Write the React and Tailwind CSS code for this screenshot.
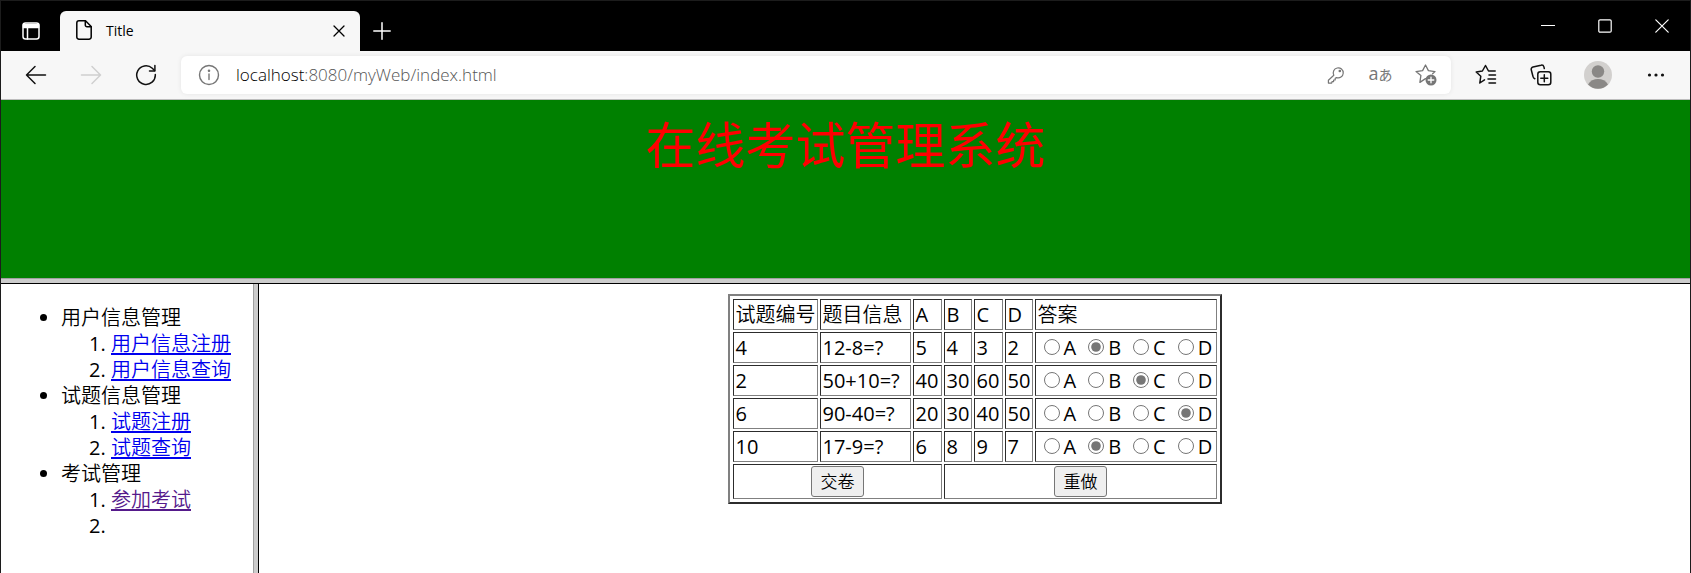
import { useState } from "react";

const CHOICES = ["A", "B", "C", "D"];

const QUESTIONS = [
  { id: "4", text: "12-8=?", options: ["5", "4", "3", "2"], answer: "B" },
  { id: "2", text: "50+10=?", options: ["40", "30", "60", "50"], answer: "C" },
  { id: "6", text: "90-40=?", options: ["20", "30", "40", "50"], answer: "D" },
  { id: "10", text: "17-9=?", options: ["6", "8", "9", "7"], answer: "B" },
];

const MENU = [
  {
    title: "用户信息管理",
    items: [{ label: "用户信息注册" }, { label: "用户信息查询" }],
  },
  { title: "试题信息管理", items: [{ label: "试题注册" }, { label: "试题查询" }] },
  { title: "考试管理", items: [{ label: "参加考试", visited: true }, {}] },
];

function Icon({ size = 20, width = 1.5, children, className = "" }) {
  return (
    <svg
      aria-hidden="true"
      width={size}
      height={size}
      viewBox={`0 0 ${size} ${size}`}
      fill="none"
      stroke="currentColor"
      strokeWidth={width}
      strokeLinecap="round"
      strokeLinejoin="round"
      className={className}
    >
      {children}
    </svg>
  );
}

function BarButton({ label, className, children }) {
  return (
    <button
      type="button"
      aria-label={label}
      className={`flex h-9 shrink-0 items-center justify-center ${className}`}
    >
      {children}
    </button>
  );
}

function TitleBar() {
  return (
    <div className="flex h-[50px] items-end bg-black text-white">
      <BarButton label="Tab actions" className="mb-[2px] w-[59px]">
        <Icon size={18}>
          <rect x="1" y="1" width="16" height="16" rx="2.5" />
          <path d="M1.5 2.5h15v3h-15z" fill="currentColor" />
          <path d="M5.500 6v11" />
        </Icon>
      </BarButton>
      <div className="flex h-10 w-[300px] items-center rounded-t-md bg-[#f7f7f7] pr-[7px] pl-4 text-black">
        <Icon size={20} className="-mt-[2px] shrink-0">
          <path d="M3 .8h6.500l5.700 5.700V17a2.200 2.200 0 0 1-2.200 2.200H3A2.200 2.200 0 0 1 .8 17V3A2.200 2.200 0 0 1 3 .8z" />
          <path d="M9.300 1v4a1.700 1.700 0 0 0 1.700 1.700h4" />
        </Icon>
        <span className="ml-[10px] flex-1 text-sm">Title</span>
        <BarButton label="Close tab" className="w-7">
          <Icon size={12} width={1.3}>
            <path d="M1 1l10 10M11 1L1 11" />
          </Icon>
        </BarButton>
      </div>
      <BarButton label="New tab" className="mb-[2px] ml-[2px] w-10">
        <Icon size={18}>
          <path d="M9 .8v16.400M.8 9h16.400" />
        </Icon>
      </BarButton>
      <div className="mb-[7px] ml-auto flex">
        <BarButton label="Minimize" className="w-[57px]">
          <Icon size={14} width={1.2}>
            <path d="M.5 6.500h13" />
          </Icon>
        </BarButton>
        <BarButton label="Maximize" className="w-[57px]">
          <Icon size={14} width={1.2}>
            <rect x=".8" y=".8" width="12.400" height="12.400" rx="1.200" />
          </Icon>
        </BarButton>
        <BarButton label="Close" className="w-[57px]">
          <Icon size={14} width={1.2}>
            <path d="M.8.8l12.400 12.400M13.200.8L.8 13.200" />
          </Icon>
        </BarButton>
      </div>
    </div>
  );
}

function Toolbar() {
  return (
    <div className="flex h-[49px] items-center border-b border-[#bdbdbd] bg-[#f7f7f7] pr-[6px] pl-[7px] text-[#111]">
      <BarButton label="Back" className="w-[55px]">
        <Icon size={22}>
          <path d="M10 2.500L1.500 11l8.500 8.500M1.500 11h19" />
        </Icon>
      </BarButton>
      <BarButton label="Forward" className="w-[55px] text-[#cfcfcf]">
        <Icon size={22}>
          <path d="M12 2.500l8.500 8.500-8.500 8.500M20.500 11h-19" />
        </Icon>
      </BarButton>
      <BarButton label="Refresh" className="w-[55px]">
        <Icon size={22}>
          <path d="M20.300 10.500A9.300 9.300 0 1 1 17.300 4.200L19.500 6.500" />
          <path d="M19.900 1.500v5.400h-5.400" />
        </Icon>
      </BarButton>
      <div className="ml-2 flex h-[38px] min-w-0 flex-1 items-center rounded-md bg-white pr-[3px] text-[#767676] shadow-[0_0_5px_rgba(0,0,0,0.08)]">
        <BarButton label="Site information" className="w-[55px]">
          <Icon size={22} width={1.4}>
            <circle cx="11" cy="11" r="9.500" />
            <path d="M11 10v5.500" />
            <circle cx="11" cy="6.800" r=".6" fill="currentColor" />
          </Icon>
        </BarButton>
        <div
          role="textbox"
          aria-label="Address"
          className="min-w-0 flex-1 truncate text-[17px] leading-6 font-light text-[#555555]"
        >
          <span className="text-black">localhost</span>:8080/myWeb/index.html
        </div>
        <BarButton label="Passwords" className="w-[45px]">
          <Icon size={18} width={1.2}>
            <path d="M6.800 9.200A5 5 0 1 1 9.600 11.600L8.200 12.300v1.700H6.600v1.600H5l-.3 1.500H1.400v-2.900z" />
            <circle cx="12.800" cy="5" r=".7" fill="currentColor" />
          </Icon>
        </BarButton>
        <BarButton label="Translate" className="w-[45px]">
          <span className="flex items-baseline pb-[2px] leading-5">
            <span className="text-lg leading-5">a</span>
            <span className="text-sm leading-5">あ</span>
          </span>
        </BarButton>
        <BarButton label="Add to favorites" className="w-[45px]">
          <Icon size={22} width={1.3}>
            <path d="M10.500 14.600l-5.600 3.800 1-7L1 7.600l6.600-1L10.500 1l2.900 5.600 6.600 1-2.400 2.200" />
            <circle cx="16" cy="16" r="5.500" fill="currentColor" stroke="none" />
            <path d="M16 13.200v5.600M13.200 16h5.600" stroke="#fff" />
          </Icon>
        </BarButton>
      </div>
      <BarButton label="Favorites" className="ml-[7px] w-[55px]">
        <Icon size={22}>
          <path d="M9.500 15.800L4.800 19l1-6.800L1.200 8l6.200-1 3.100-5.500 3 5.500h6.700" />
          <path d="M14 11h6.500M13 15h7.500M14 19h6.500" />
        </Icon>
      </BarButton>
      <BarButton label="Collections" className="w-[55px]">
        <Icon size={22}>
          <rect x="7.800" y="7.800" width="13" height="13" rx="2.500" />
          <path d="M14.300 10.800v7M10.800 14.300h7" />
          <path d="M4.800 14.800a3 3 0 0 1-1.800-2.300L1.300 6A2.400 2.400 0 0 1 3 3l8-1.800a2.400 2.400 0 0 1 2.900 1.700l.4 1.600" />
        </Icon>
      </BarButton>
      <BarButton label="Profile" className="w-[60px]">
        <svg aria-hidden="true" width="28" height="28" viewBox="0 0 28 28">
          <circle cx="14" cy="14" r="14" fill="#d2d0ce" />
          <circle cx="14" cy="10.500" r="6.200" fill="#8a8886" />
          <path d="M4 23.500C6 19.800 10 18 14 18s8 1.800 10 5.500A14 14 0 0 1 4 23.500z" fill="#8a8886" />
        </svg>
      </BarButton>
      <BarButton label="Settings and more" className="w-14">
        <svg aria-hidden="true" width="18" height="4" viewBox="0 0 18 4" fill="currentColor">
          <circle cx="2.500" cy="2" r="1.600" />
          <circle cx="9" cy="2" r="1.600" />
          <circle cx="15.500" cy="2" r="1.600" />
        </svg>
      </BarButton>
    </div>
  );
}

function Sidebar() {
  return (
    <nav className="w-[252px] shrink-0 pt-[21px] pl-[60px] text-xl leading-[26px]">
      <ul className="list-disc">
        {MENU.map((group) => (
          <li key={group.title}>
            <span className="font-[350]">{group.title}</span>
            <ol className="list-decimal pl-[50px]">
              {group.items.map((item, index) => (
                <li key={index} className="min-h-[26px]">
                  {item.label && (
                    <a
                      href="#"
                      className={
                        item.visited
                          ? "font-[350] text-[#551a8b] underline decoration-2 underline-offset-2"
                          : "font-[350] text-[#0000ee] underline decoration-2 underline-offset-2"
                      }
                    >
                      {item.label}
                    </a>
                  )}
                </li>
              ))}
            </ol>
          </li>
        ))}
      </ul>
    </nav>
  );
}

const CELL =
  "border border-t-[#2c2c2c] border-r-[#808080] border-b-[#808080] border-l-[#2c2c2c] py-px pr-px pl-[2px]";
const HEADING_CELL = `${CELL} font-[350]`;
const BUTTON =
  "block mx-auto h-[31px] w-[53px] rounded-[3px] border border-[#767676] bg-[#efefef] text-[17px] leading-6 font-[350]";

function ExamTable() {
  const [answers, setAnswers] = useState(() => QUESTIONS.map((q) => q.answer));

  return (
    <table className="mx-auto border-separate border-spacing-[2px] border-2 border-t-[#808080] border-r-[#2c2c2c] border-b-[#2c2c2c] border-l-[#808080] p-px text-xl leading-[27px]">
      <colgroup>
        <col className="w-[85px]" />
        <col className="w-[91px]" />
        <col className="w-[29px]" />
        <col className="w-[28px]" />
        <col className="w-[29px]" />
        <col className="w-[28px]" />
        <col className="w-[182px]" />
      </colgroup>
      <tbody>
        <tr>
          <td className={HEADING_CELL}>试题编号</td>
          <td className={HEADING_CELL}>题目信息</td>
          {CHOICES.map((choice) => (
            <td key={choice} className={CELL}>
              {choice}
            </td>
          ))}
          <td className={HEADING_CELL}>答案</td>
        </tr>
        {QUESTIONS.map((question, row) => (
          <tr key={question.id}>
            <td className={CELL}>{question.id}</td>
            <td className={CELL}>{question.text}</td>
            {question.options.map((option, index) => (
              <td key={index} className={CELL}>
                {option}
              </td>
            ))}
            <td className={CELL}>
              <div className="flex gap-3 pl-[6px]">
                {CHOICES.map((choice) => (
                  <label key={choice} className="flex items-center gap-1">
                    <input
                      type="radio"
                      name={`answer-${question.id}`}
                      value={choice}
                      checked={answers[row] === choice}
                      onChange={() =>
                        setAnswers(answers.map((a, i) => (i === row ? choice : a)))
                      }
                      className="mb-[2px] size-4 accent-[#767676]"
                    />
                    {choice}
                  </label>
                ))}
              </div>
            </td>
          </tr>
        ))}
        <tr>
          <td colSpan={3} className={CELL}>
            <button type="submit" className={BUTTON}>
              交卷
            </button>
          </td>
          <td colSpan={4} className={CELL}>
            <button type="reset" className={BUTTON}>
              重做
            </button>
          </td>
        </tr>
      </tbody>
    </table>
  );
}

export default function App() {
  return (
    <div className="flex min-h-screen flex-col border-x border-t border-[#1c1c1c] bg-white font-['Open_Sans','Noto_Sans_CJK_SC',sans-serif] text-black">
      <TitleBar />
      <Toolbar />
      <header className="h-[178px] bg-[#008000] pt-[10px] text-center">
        <h1 className="text-[50px] leading-[70px] font-normal text-[#ff0000]">在线考试管理系统</h1>
      </header>
      <div className="h-[6px] border-t border-b border-t-[#a0a0a0] border-b-black bg-[#cccccc]" />
      <div className="flex flex-1">
        <Sidebar />
        <div className="w-[6px] shrink-0 border-r border-l border-r-black border-l-[#a0a0a0] bg-[#cccccc]" />
        <main className="flex-1 pt-[10px]">
          <form onSubmit={(event) => event.preventDefault()}>
            <ExamTable />
          </form>
        </main>
      </div>
    </div>
  );
}
